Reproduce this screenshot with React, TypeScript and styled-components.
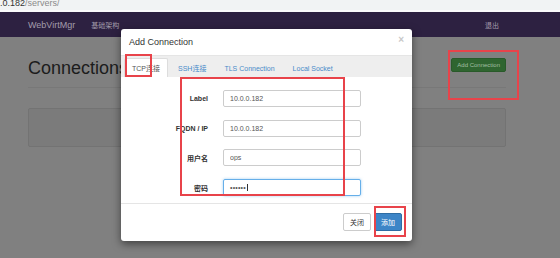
import React from 'react'
import styled, { createGlobalStyle, css } from 'styled-components'

const GlobalStyle = createGlobalStyle`
	html, body {
		margin: 0;
		padding: 0;
	}
	body {
		width: 560px;
		height: 258px;
		overflow: hidden;
		background: #808080;
		font-family: 'Liberation Sans', Arial, 'Noto Sans CJK SC', sans-serif;
	}
	* {
		box-sizing: border-box;
	}
`

const Page = styled.div`
	position: relative;
	width: 560px;
	height: 258px;
	overflow: hidden;
	background: #808080;
`

const UrlBar = styled.div`
	height: 12px;
	background: #f1f3f4;
	border-bottom: 2px solid #fbfbfb;
	font-size: 9px;
	line-height: 6px;
	color: #333;
	white-space: nowrap;
	overflow: hidden;

	span {
		color: #8a8a8a;
	}
`

const Navbar = styled.div`
	height: 25px;
	background: #2d2141;
	display: flex;
	align-items: center;
	padding: 0 61px 0 28px;
	color: #a39cab;
`

const Brand = styled.div`
	font-size: 9px;
`

const NavLink = styled.div`
	font-size: 7px;
	margin-left: 16px;

	&:last-child {
		margin-left: auto;
	}
`

const Main = styled.div`
	padding: 21px 54px 0 28px;
`

const PageHeader = styled.div`
	display: flex;
	justify-content: space-between;
	align-items: flex-start;
	padding-bottom: 9px;
	border-bottom: 1px solid #787878;
`

const Title = styled.h1`
	margin: 0;
	font-size: 18px;
	line-height: 20px;
	font-weight: 400;
	color: #1c1c1c;
`

const GreenButton = styled.div`
	height: 14px;
	padding: 0 5px;
	display: flex;
	align-items: center;
	font-size: 6px;
	color: #a4bfa4;
	background: #2f6530;
	border: 1px solid #295a2a;
	border-radius: 2px;
`

const Well = styled.div`
	margin-top: 20px;
	height: 39px;
	background: #7b7b7b;
	border: 1px solid #737373;
	border-radius: 2px;
`

const Modal = styled.div`
	position: absolute;
	left: 121px;
	top: 29px;
	width: 291px;
	background: #fff;
	border-radius: 3px;
	box-shadow: 0 3px 8px rgba(0, 0, 0, 0.5);
	overflow: hidden;
`

const ModalHeader = styled.div`
	height: 27px;
	padding: 0 8px;
	display: flex;
	align-items: center;
	justify-content: space-between;
	border-bottom: 1px solid #e5e5e5;
`

const ModalTitle = styled.div`
	font-size: 9px;
	color: #333;
`

const Close = styled.div`
	font-size: 10px;
	font-weight: bold;
	line-height: 1;
	color: #c8c8c8;
	margin-top: -5px;
`

const Tabs = styled.div`
	height: 21px;
	background: #eee;
	display: flex;
	align-items: flex-end;
	padding-left: 3px;
`

const Tab = styled.div<{ $active?: boolean }>`
	height: 19px;
	padding: 0 7px;
	margin-right: 2px;
	display: flex;
	align-items: center;
	font-size: 7px;
	color: #4a8bc9;
	border: 1px solid transparent;
	border-bottom: 0;
	border-radius: 2px 2px 0 0;

	${(p) =>
		p.$active &&
		css`
			background: #fff;
			color: #555;
			border-color: #ddd;
		`}
`

const FormBody = styled.div`
	display: grid;
	grid-template-columns: 87px 138px;
	column-gap: 15px;
	row-gap: 12.7px;
	align-items: center;
	padding: 13px 0 7px;
`

const Label = styled.label`
	text-align: right;
	font-size: 7px;
	font-weight: bold;
	color: #333;
`

const fieldStyle = css`
	height: 17px;
	width: 100%;
	padding: 0 6px;
	border: 1px solid #ccc;
	border-radius: 2px;
	font-family: inherit;
	font-size: 7px;
	color: #555;
	background: #fff;
	outline: none;
`

const Input = styled.input`
	${fieldStyle}
`

const FocusedField = styled.div`
	${fieldStyle}
	display: flex;
	align-items: center;
	border-color: #66afe9;
	box-shadow: 0 0 3px rgba(102, 175, 233, 0.6);
	letter-spacing: 0.2px;
`

const Caret = styled.span`
	width: 1px;
	height: 7px;
	margin-left: 1px;
	background: #333;
`

const ModalFooter = styled.div`
	border-top: 1px solid #e5e5e5;
	padding: 9px 10px 10px;
	display: flex;
	justify-content: flex-end;
	gap: 3px;
`

const Button = styled.div<{ $primary?: boolean }>`
	height: 18px;
	padding: 0 6px;
	display: flex;
	align-items: center;
	font-size: 7px;
	border-radius: 2px;
	border: 1px solid ${(p) => (p.$primary ? '#2e6da4' : '#ccc')};
	background: ${(p) => (p.$primary ? '#3d85c7' : '#fff')};
	color: ${(p) => (p.$primary ? '#fff' : '#333')};
`

const Mark = styled.div<{ $x: number; $y: number; $w: number; $h: number }>`
	position: absolute;
	left: ${(p) => p.$x}px;
	top: ${(p) => p.$y}px;
	width: ${(p) => p.$w}px;
	height: ${(p) => p.$h}px;
	border: 2px solid #e8434a;
	pointer-events: none;
`

const fields = [
	{ label: 'Label', value: '10.0.0.182' },
	{ label: 'FQDN / IP', value: '10.0.0.182' },
	{ label: '用户名', value: 'ops' },
]

const App = () => {
	return (
		<Page>
			<GlobalStyle />
			<UrlBar>
				.0.182<span>/servers/</span>
			</UrlBar>
			<Navbar>
				<Brand>WebVirtMgr</Brand>
				<NavLink>基础架构</NavLink>
				<NavLink>退出</NavLink>
			</Navbar>
			<Main>
				<PageHeader>
					<Title>Connections</Title>
					<GreenButton>Add Connection</GreenButton>
				</PageHeader>
				<Well />
			</Main>

			<Modal>
				<ModalHeader>
					<ModalTitle>Add Connection</ModalTitle>
					<Close>×</Close>
				</ModalHeader>
				<Tabs>
					<Tab $active>TCP连接</Tab>
					<Tab>SSH连接</Tab>
					<Tab>TLS Connection</Tab>
					<Tab>Local Socket</Tab>
				</Tabs>
				<FormBody>
					{fields.map((f) => (
						<React.Fragment key={f.label}>
							<Label>{f.label}</Label>
							<Input defaultValue={f.value} readOnly />
						</React.Fragment>
					))}
					<Label>密码</Label>
					<FocusedField>
						••••••
						<Caret />
					</FocusedField>
				</FormBody>
				<ModalFooter>
					<Button>关闭</Button>
					<Button $primary>添加</Button>
				</ModalFooter>
			</Modal>

			<Mark $x={125} $y={54} $w={27} $h={23} />
			<Mark $x={180} $y={77} $w={165} $h={119} />
			<Mark $x={448} $y={50} $w={71} $h={50} />
			<Mark $x={374} $y={206} $w={32} $h={31} />
		</Page>
	)
}

export default App
